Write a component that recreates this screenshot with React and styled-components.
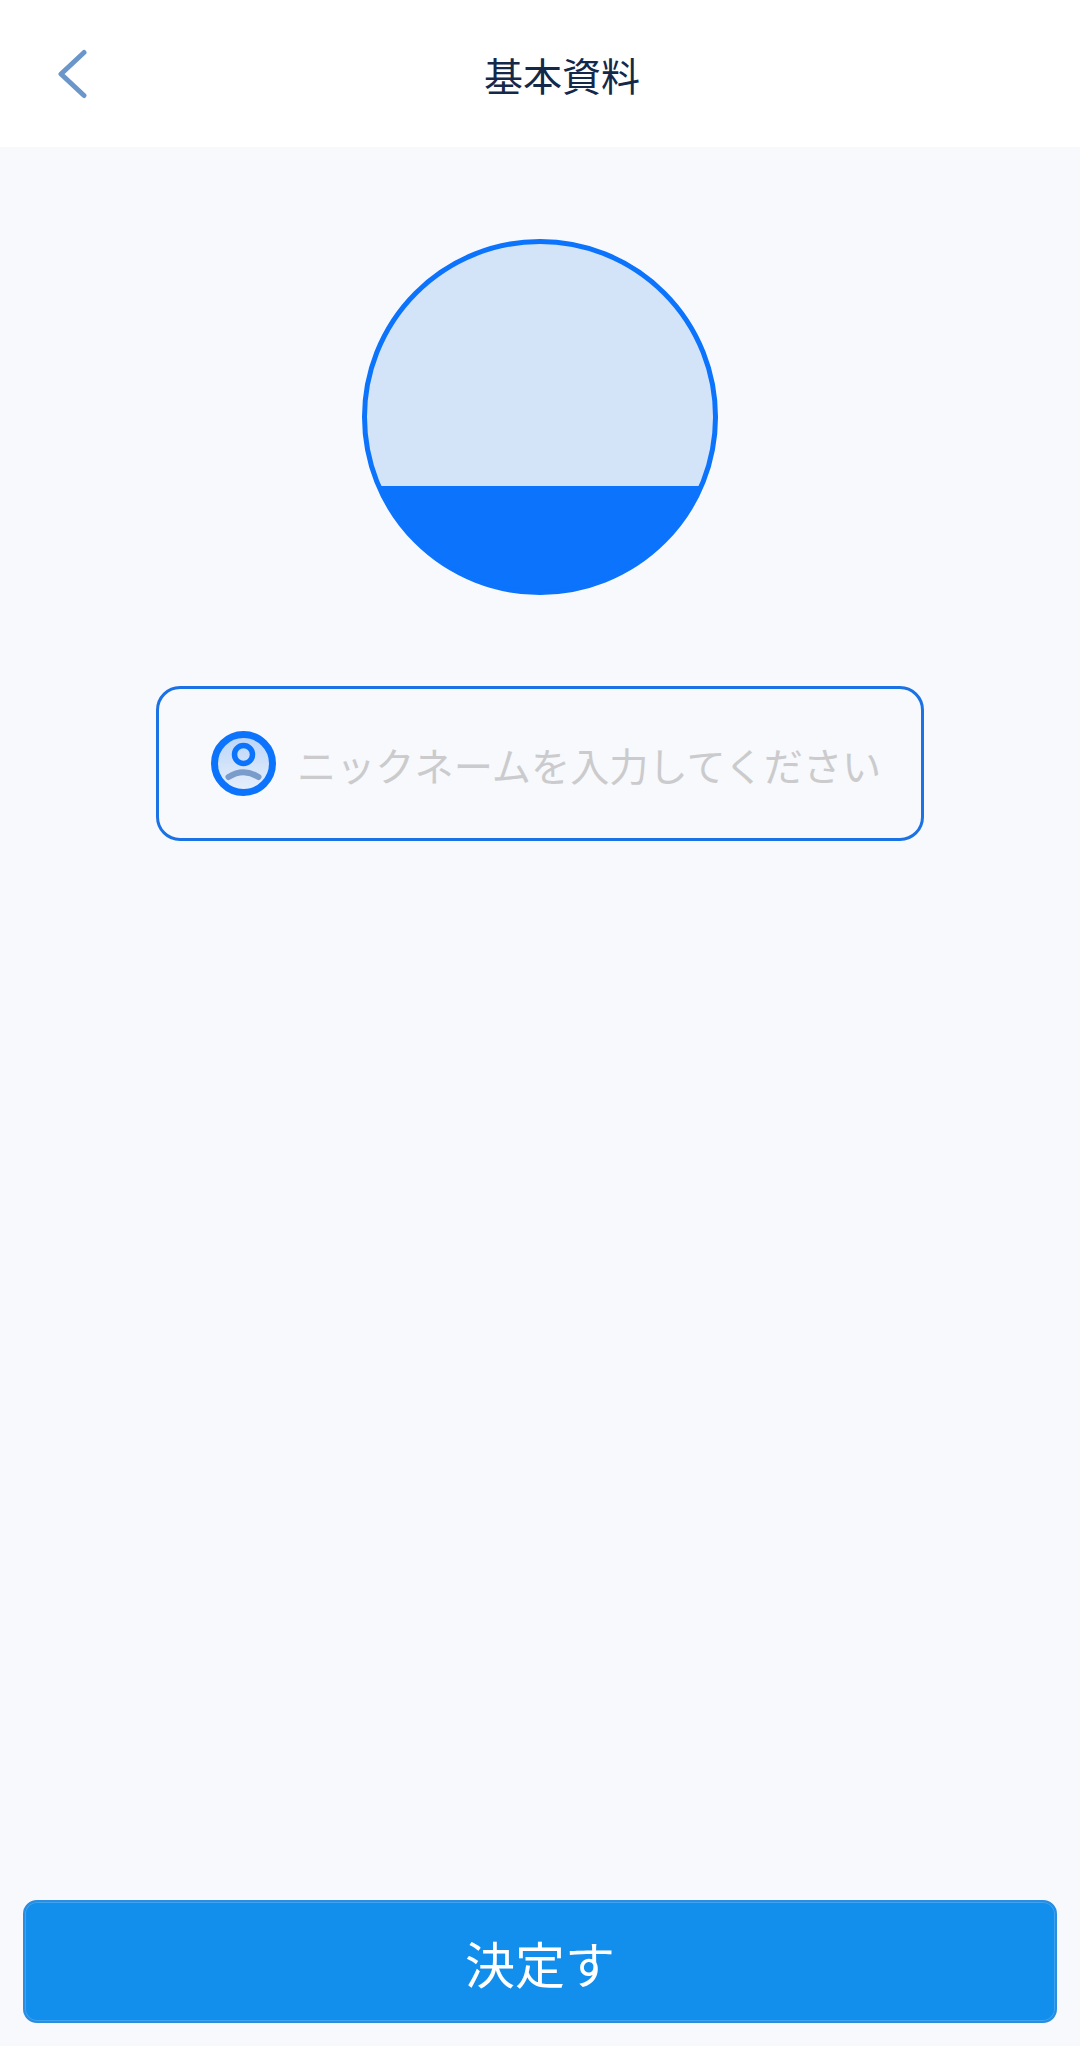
import React from 'react'
import styled, { createGlobalStyle } from 'styled-components'

const GlobalStyle = createGlobalStyle`
  html, body {
    margin: 0;
    padding: 0;
    background: #f7f9fc;
    font-family: "Noto Sans CJK JP", "Noto Sans CJK SC", "Noto Sans", sans-serif;
  }
  * {
    box-sizing: border-box;
  }
`

const Page = styled.div`
  display: flex;
  flex-direction: column;
  width: 1080px;
  height: 2046px;
  background: #f7f9fc;
`

const Header = styled.header`
  display: flex;
  align-items: center;
  flex-shrink: 0;
  height: 147px;
  padding: 0 44px 0 57px;
  background: #fff;
`

const BackButton = styled.button`
  display: flex;
  width: 31px;
  height: 50px;
  padding: 0;
  border: 0;
  background: none;
`

const Title = styled.h1`
  flex: 1;
  margin: 0;
  color: #14284a;
  font-size: 39px;
  font-weight: 400;
  line-height: 52px;
  text-align: center;
`

const Main = styled.main`
  display: flex;
  flex: 1;
  flex-direction: column;
  align-items: center;
  padding-top: 92px;
`

const Avatar = styled.div`
  width: 356px;
  height: 356px;
  border: 5px solid #0b73fc;
  border-radius: 50%;
  background: linear-gradient(#d3e4f9 247px, #0b73fc 247px) border-box;
`

const NameField = styled.label`
  display: flex;
  align-items: center;
  gap: 21px;
  width: 768px;
  height: 155px;
  margin-top: 91px;
  padding-left: 52px;
  border: 3px solid #1b72e4;
  border-radius: 24px;
`

const NameInput = styled.input`
  flex: 1;
  min-width: 0;
  padding: 0;
  border: 0;
  outline: none;
  background: none;
  font-family: inherit;
  font-size: 39.2px;
  font-weight: 400;

  &::placeholder {
    color: #cbcbcd;
    opacity: 1;
  }
`

const Footer = styled.footer`
  flex-shrink: 0;
  padding: 0 23px 23px;
`

const SubmitButton = styled.button`
  display: block;
  width: 100%;
  height: 123px;
  padding: 0;
  border: 2px solid #2a8de0;
  border-radius: 14px;
  background: #128fec;
  box-shadow: inset 0 0 0 1px #3fa2ef;
  color: #fff;
  font-family: inherit;
  font-size: 50px;
  font-weight: 400;
`

function BackIcon() {
  return (
    <svg width="31" height="50" viewBox="0 0 31 50" fill="none">
      <path
        d="M27 3.5 L4 25 L27 46.5"
        stroke="#6a96c9"
        strokeWidth="5"
        strokeLinecap="round"
        strokeLinejoin="round"
      />
    </svg>
  )
}

function UserIcon() {
  return (
    <svg width="65" height="65" viewBox="0 0 65 65" fill="none" style={{ flexShrink: 0 }}>
      <defs>
        <linearGradient id="userFill" x1="0" y1="0" x2="0" y2="1">
          <stop offset="0" stopColor="#b9d4f8" />
          <stop offset="1" stopColor="#e8f0fb" />
        </linearGradient>
      </defs>
      <circle cx="32.5" cy="32.5" r="29" fill="url(#userFill)" stroke="#0b73fc" strokeWidth="7" />
      <circle cx="32.5" cy="23.5" r="9" stroke="#0b73fc" strokeWidth="5.5" />
      <path d="M17.5 46 Q32.5 36.5 47.5 46" stroke="#7a9ccb" strokeWidth="6" strokeLinecap="round" />
    </svg>
  )
}

export default function App() {
  return (
    <Page>
      <GlobalStyle />
      <Header>
        <BackButton aria-label="back">
          <BackIcon />
        </BackButton>
        <Title>基本資料</Title>
      </Header>
      <Main>
        <Avatar />
        <NameField>
          <UserIcon />
          <NameInput placeholder="ニックネームを入力してください" />
        </NameField>
      </Main>
      <Footer>
        <SubmitButton>決定す</SubmitButton>
      </Footer>
    </Page>
  )
}
